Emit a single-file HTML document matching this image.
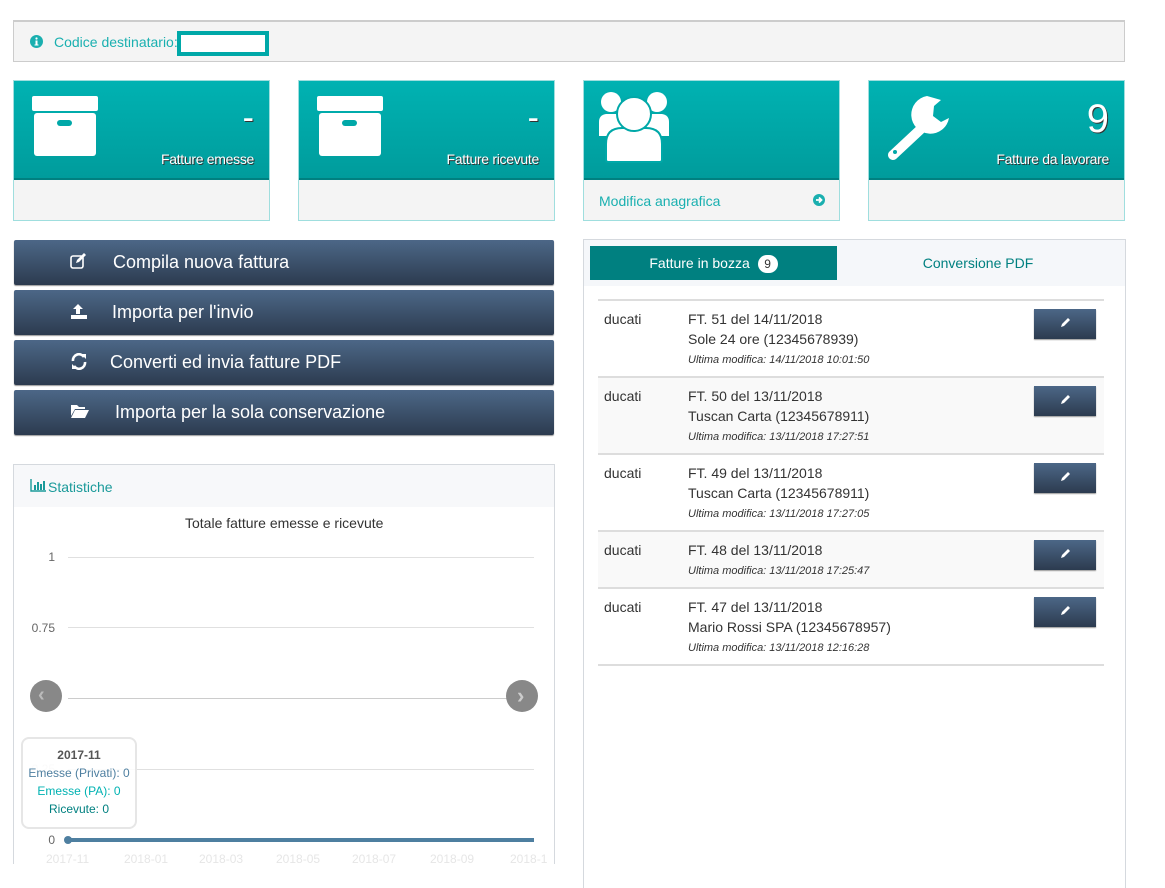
<!DOCTYPE html>
<html><head><meta charset="utf-8">
<style>
*{box-sizing:border-box;margin:0;padding:0}
html,body{width:1165px;height:888px;overflow:hidden}
body{background:#fff;font-family:"Liberation Sans",sans-serif;position:relative;color:#333}
.a{position:absolute}
.card{position:absolute;top:80px;width:257px;height:141px;border:1px solid #9fdede;background:#f4f4f4}
.card .top{position:absolute;left:0;top:0;right:0;height:99px;background:linear-gradient(#00b2b2,#009c9c);border-bottom:2px solid #008080}
.card .lbl{position:absolute;right:15px;top:70px;color:#fff;font-size:14px;letter-spacing:-0.3px;text-shadow:1px 1px 0 #333}
.card .num{position:absolute;right:15px;color:#fff;text-shadow:1px 1px 0 #333}
.btn{position:absolute;left:14px;width:540px;height:45px;background:linear-gradient(#4c6787,#2c3b4f);border-radius:2px;color:#fff;font-size:18px;box-shadow:0 1px 1px #999}
.btn span{position:absolute;top:12px}
.btn svg{position:absolute;top:13px;left:56px}
.row{position:absolute;left:598px;width:506px;border-top:2px solid #ddd}
.row .d{position:absolute;left:6px;top:10px;font-size:14px}
.row .t{position:absolute;left:90px;top:8px;font-size:14px;line-height:20px}
.row .m{font-size:11px;font-style:italic;line-height:22px}
.row .e{position:absolute;left:436px;top:8px;width:62px;height:30px;background:linear-gradient(#4c6787,#2c3b4f);box-shadow:0 1px 1px #999}
.gl{position:absolute;left:68px;width:466px;height:1px;background:#e0e0e0}
.yl{position:absolute;right:1110px;font-size:12px;color:#666}
.xl{position:absolute;top:852px;font-size:12px;color:#e6e6e6}
</style></head><body>

<div class="a" style="left:13px;top:20px;width:1112px;height:42px;background:#f4f4f4;border:1px solid #ccc;border-top:2px solid #ccc"></div>
<svg class="a" style="left:30px;top:35px" width="13" height="13" viewBox="0 0 13 13"><circle cx="6.5" cy="6.5" r="6.5" fill="#1aafaf"/><rect x="5.5" y="5.5" width="2" height="4.5" fill="#fff"/><rect x="4.5" y="9.5" width="4" height="1" fill="#fff"/><circle cx="6.5" cy="3.5" r="1.1" fill="#fff"/></svg>
<div class="a" style="left:54px;top:34px;font-size:14px;color:#1ab0b0">Codice destinatario:</div>
<div class="a" style="left:177px;top:31px;width:92px;height:25px;border:4px solid #00a8a8;background:#fff"></div>

<div class="card" style="left:13px"><div class="top">
<svg class="a" style="left:17px;top:14px" width="70" height="62"><rect x="1" y="1" width="66" height="15" rx="2" fill="#fff"/><rect x="3" y="18" width="62" height="43" rx="3" fill="#fff"/><rect x="26" y="25" width="15" height="6" rx="3" fill="#00a8a8"/></svg>
<div class="num" style="top:18px;font-size:34px;">-</div>
<div class="lbl">Fatture emesse</div></div></div>
<div class="card" style="left:298px"><div class="top">
<svg class="a" style="left:17px;top:14px" width="70" height="62"><rect x="1" y="1" width="66" height="15" rx="2" fill="#fff"/><rect x="3" y="18" width="62" height="43" rx="3" fill="#fff"/><rect x="26" y="25" width="15" height="6" rx="3" fill="#00a8a8"/></svg>
<div class="num" style="top:18px;font-size:34px;">-</div>
<div class="lbl">Fatture ricevute</div></div></div>
<div class="card" style="left:583px"><div class="top">
<svg class="a" style="left:12px;top:7px" width="80" height="78"><circle cx="15" cy="14" r="10" fill="#fff"/><circle cx="61" cy="14" r="10" fill="#fff"/><path d="M3 48 V34 Q3 27 10 26 H30 V48 Z" fill="#fff"/><path d="M73 48 V34 Q73 27 66 26 H46 V48 Z" fill="#fff"/><path d="M10 72 V56 Q10 40 26 40 H50 Q66 40 66 56 V72 Q66 74 63 74 H13 Q10 74 10 72 Z" fill="#fff" stroke="#00a8a8" stroke-width="2"/><circle cx="38" cy="26" r="17" fill="#fff" stroke="#00a8a8" stroke-width="2"/></svg>
</div>
<div class="a" style="left:15px;top:112px;font-size:14px;color:#1ab0b0">Modifica anagrafica</div>
<svg class="a" style="left:229px;top:113px" width="12" height="12" viewBox="0 0 12 12"><circle cx="6" cy="6" r="6" fill="#1aafaf"/><path d="M3 6 H8 M6 3.5 L8.5 6 L6 8.5" stroke="#fff" stroke-width="1.8" fill="none"/></svg>
</div>
<div class="card" style="left:868px"><div class="top">
<svg class="a" style="left:14px;top:13px" width="70" height="70" viewBox="0 0 70 70"><path d="M44 2 A19 19 0 1 0 66 24 L58 28 L50 22 L51 12 L58 6 Z" fill="#fff"/><path d="M36 30 L6 58 A5 5 0 0 0 13 65 L43 37 Z" fill="#fff"/><circle cx="12" cy="58" r="2" fill="#00a8a8"/></svg>
<div class="num" style="top:16px;font-size:40px;">9</div>
<div class="lbl">Fatture da lavorare</div></div></div>

<div class="btn" style="top:240px"><svg width="18" height="16" viewBox="0 0 18 16"><rect x="1" y="3" width="12" height="12" rx="2" fill="none" stroke="#fff" stroke-width="1.6"/><path d="M6 10 L7 7 L14 0 L16 2 L9 9 Z" fill="#fff"/></svg><span style="left:99px">Compila nuova fattura</span></div>
<div class="btn" style="top:290px"><svg width="18" height="17" viewBox="0 0 18 17"><path d="M8 1 L3 6 H6 V11 H10 V6 H13 Z" fill="#fff"/><rect x="1" y="12" width="16" height="4" fill="#fff"/></svg><span style="left:98px">Importa per l'invio</span></div>
<div class="btn" style="top:340px"><svg width="18" height="17" viewBox="0 0 18 17"><path d="M3 8 A6 6 0 0 1 14 4" stroke="#fff" stroke-width="2.6" fill="none"/><path d="M11 1 L16 1 L16 6 Z" fill="#fff"/><path d="M15 9 A6 6 0 0 1 4 13" stroke="#fff" stroke-width="2.6" fill="none"/><path d="M7 16 L2 16 L2 11 Z" fill="#fff"/></svg><span style="left:96px">Converti ed invia fatture PDF</span></div>
<div class="btn" style="top:390px"><svg width="20" height="16" viewBox="0 0 20 16"><path d="M1 2 H7 L9 4 H15 V6 H5 L1 13 Z" fill="#fff"/><path d="M5 7 H19 L15 15 H1 Z" fill="#fff"/></svg><span style="left:101px">Importa per la sola conservazione</span></div>

<div class="a" style="left:13px;top:464px;width:542px;height:400px;border:1px solid #d5d9de;border-bottom:none"></div>
<div class="a" style="left:14px;top:465px;width:540px;height:42px;background:#f7f8fa"></div>
<svg class="a" style="left:30px;top:479px" width="16" height="13" viewBox="0 0 16 13"><path d="M1 0 V12 H16" stroke="#1a9a9a" stroke-width="1.4" fill="none"/><rect x="4" y="6" width="2" height="5" fill="#1a9a9a"/><rect x="7" y="3" width="2" height="8" fill="#1a9a9a"/><rect x="10" y="5" width="2" height="6" fill="#1a9a9a"/><rect x="13" y="2" width="2" height="9" fill="#1a9a9a"/></svg>
<div class="a" style="left:48px;top:479px;font-size:14px;color:#1a9a9a">Statistiche</div>
<div class="a" style="left:185px;top:515px;font-size:14px;color:#333">Totale fatture emesse e ricevute</div>
<div class="gl" style="top:557px"></div><div class="gl" style="top:627px"></div><div class="gl" style="top:698px;background:#ccc"></div><div class="gl" style="top:769px"></div>
<div class="yl" style="top:550px">1</div><div class="yl" style="top:621px">0.75</div><div class="yl" style="top:762px;color:#ddd">0.25</div><div class="yl" style="top:833px">0</div>
<div class="a" style="left:68px;top:838px;width:466px;height:4px;background:#4e7fa0"></div>
<div class="a" style="left:64px;top:836px;width:8px;height:8px;border-radius:50%;background:#4e7fa0"></div>
<div class="xl" style="left:46px">2017-11</div><div class="xl" style="left:124px">2018-01</div><div class="xl" style="left:199px">2018-03</div><div class="xl" style="left:276px">2018-05</div><div class="xl" style="left:352px">2018-07</div><div class="xl" style="left:430px">2018-09</div><div class="xl" style="left:510px">2018-1</div>
<div class="a" style="left:30px;top:680px;width:32px;height:32px;border-radius:50%;background:#888"></div>
<div class="a" style="left:38px;top:684px;color:#bbb;font-size:20px;font-weight:bold">&lsaquo;</div>
<div class="a" style="left:506px;top:680px;width:32px;height:32px;border-radius:50%;background:#888"></div>
<div class="a" style="left:517px;top:683px;color:#ccc;font-size:22px;font-weight:bold">&rsaquo;</div>
<div class="a" style="left:21px;top:737px;width:116px;height:92px;border:2px solid #e6e6e6;border-radius:8px;background:rgba(255,255,255,.85);text-align:center;font-size:12px;line-height:18px;padding-top:7px">
<div style="font-weight:bold;color:#555">2017-11</div><div style="color:#4e7fa0">Emesse (Privati): 0</div><div style="color:#00b2b2">Emesse (PA): 0</div><div style="color:#008080">Ricevute: 0</div></div>

<div class="a" style="left:583px;top:239px;width:543px;height:649px;border:1px solid #d5d9de;border-bottom:none"></div>
<div class="a" style="left:584px;top:240px;width:541px;height:46px;background:#f5f7fa"></div>
<div class="a" style="left:590px;top:246px;width:247px;height:34px;background:#008080;color:#fff;font-size:14px;text-align:center;line-height:34px">Fatture in bozza <span style="display:inline-block;background:#fff;color:#333;border-radius:10px;width:20px;height:18px;line-height:18px;font-size:12px;margin-left:4px">9</span></div>
<div class="a" style="left:837px;top:246px;width:282px;height:34px;color:#008080;font-size:14px;text-align:center;line-height:34px">Conversione PDF</div>

<div class="row" style="top:299px;height:78px"><div class="d">ducati</div><div class="t">FT. 51 del 14/11/2018<br>Sole 24 ore (12345678939)<div class="m">Ultima modifica: 14/11/2018 10:01:50</div></div><div class="e"><svg style="position:absolute;left:25px;top:8px" width="12" height="12"><path d="M2 10 L3 7 L9 1 L11 3 L5 9 Z" fill="#fff"/></svg></div></div>
<div class="row" style="top:376px;height:78px;background:#f9f9f9"><div class="d">ducati</div><div class="t">FT. 50 del 13/11/2018<br>Tuscan Carta (12345678911)<div class="m">Ultima modifica: 13/11/2018 17:27:51</div></div><div class="e"><svg style="position:absolute;left:25px;top:8px" width="12" height="12"><path d="M2 10 L3 7 L9 1 L11 3 L5 9 Z" fill="#fff"/></svg></div></div>
<div class="row" style="top:453px;height:78px"><div class="d">ducati</div><div class="t">FT. 49 del 13/11/2018<br>Tuscan Carta (12345678911)<div class="m">Ultima modifica: 13/11/2018 17:27:05</div></div><div class="e"><svg style="position:absolute;left:25px;top:8px" width="12" height="12"><path d="M2 10 L3 7 L9 1 L11 3 L5 9 Z" fill="#fff"/></svg></div></div>
<div class="row" style="top:530px;height:58px;background:#f9f9f9"><div class="d">ducati</div><div class="t">FT. 48 del 13/11/2018<div class="m">Ultima modifica: 13/11/2018 17:25:47</div></div><div class="e"><svg style="position:absolute;left:25px;top:8px" width="12" height="12"><path d="M2 10 L3 7 L9 1 L11 3 L5 9 Z" fill="#fff"/></svg></div></div>
<div class="row" style="top:587px;height:79px;border-bottom:2px solid #ddd"><div class="d">ducati</div><div class="t">FT. 47 del 13/11/2018<br>Mario Rossi SPA (12345678957)<div class="m">Ultima modifica: 13/11/2018 12:16:28</div></div><div class="e"><svg style="position:absolute;left:25px;top:8px" width="12" height="12"><path d="M2 10 L3 7 L9 1 L11 3 L5 9 Z" fill="#fff"/></svg></div></div>

</body></html>
